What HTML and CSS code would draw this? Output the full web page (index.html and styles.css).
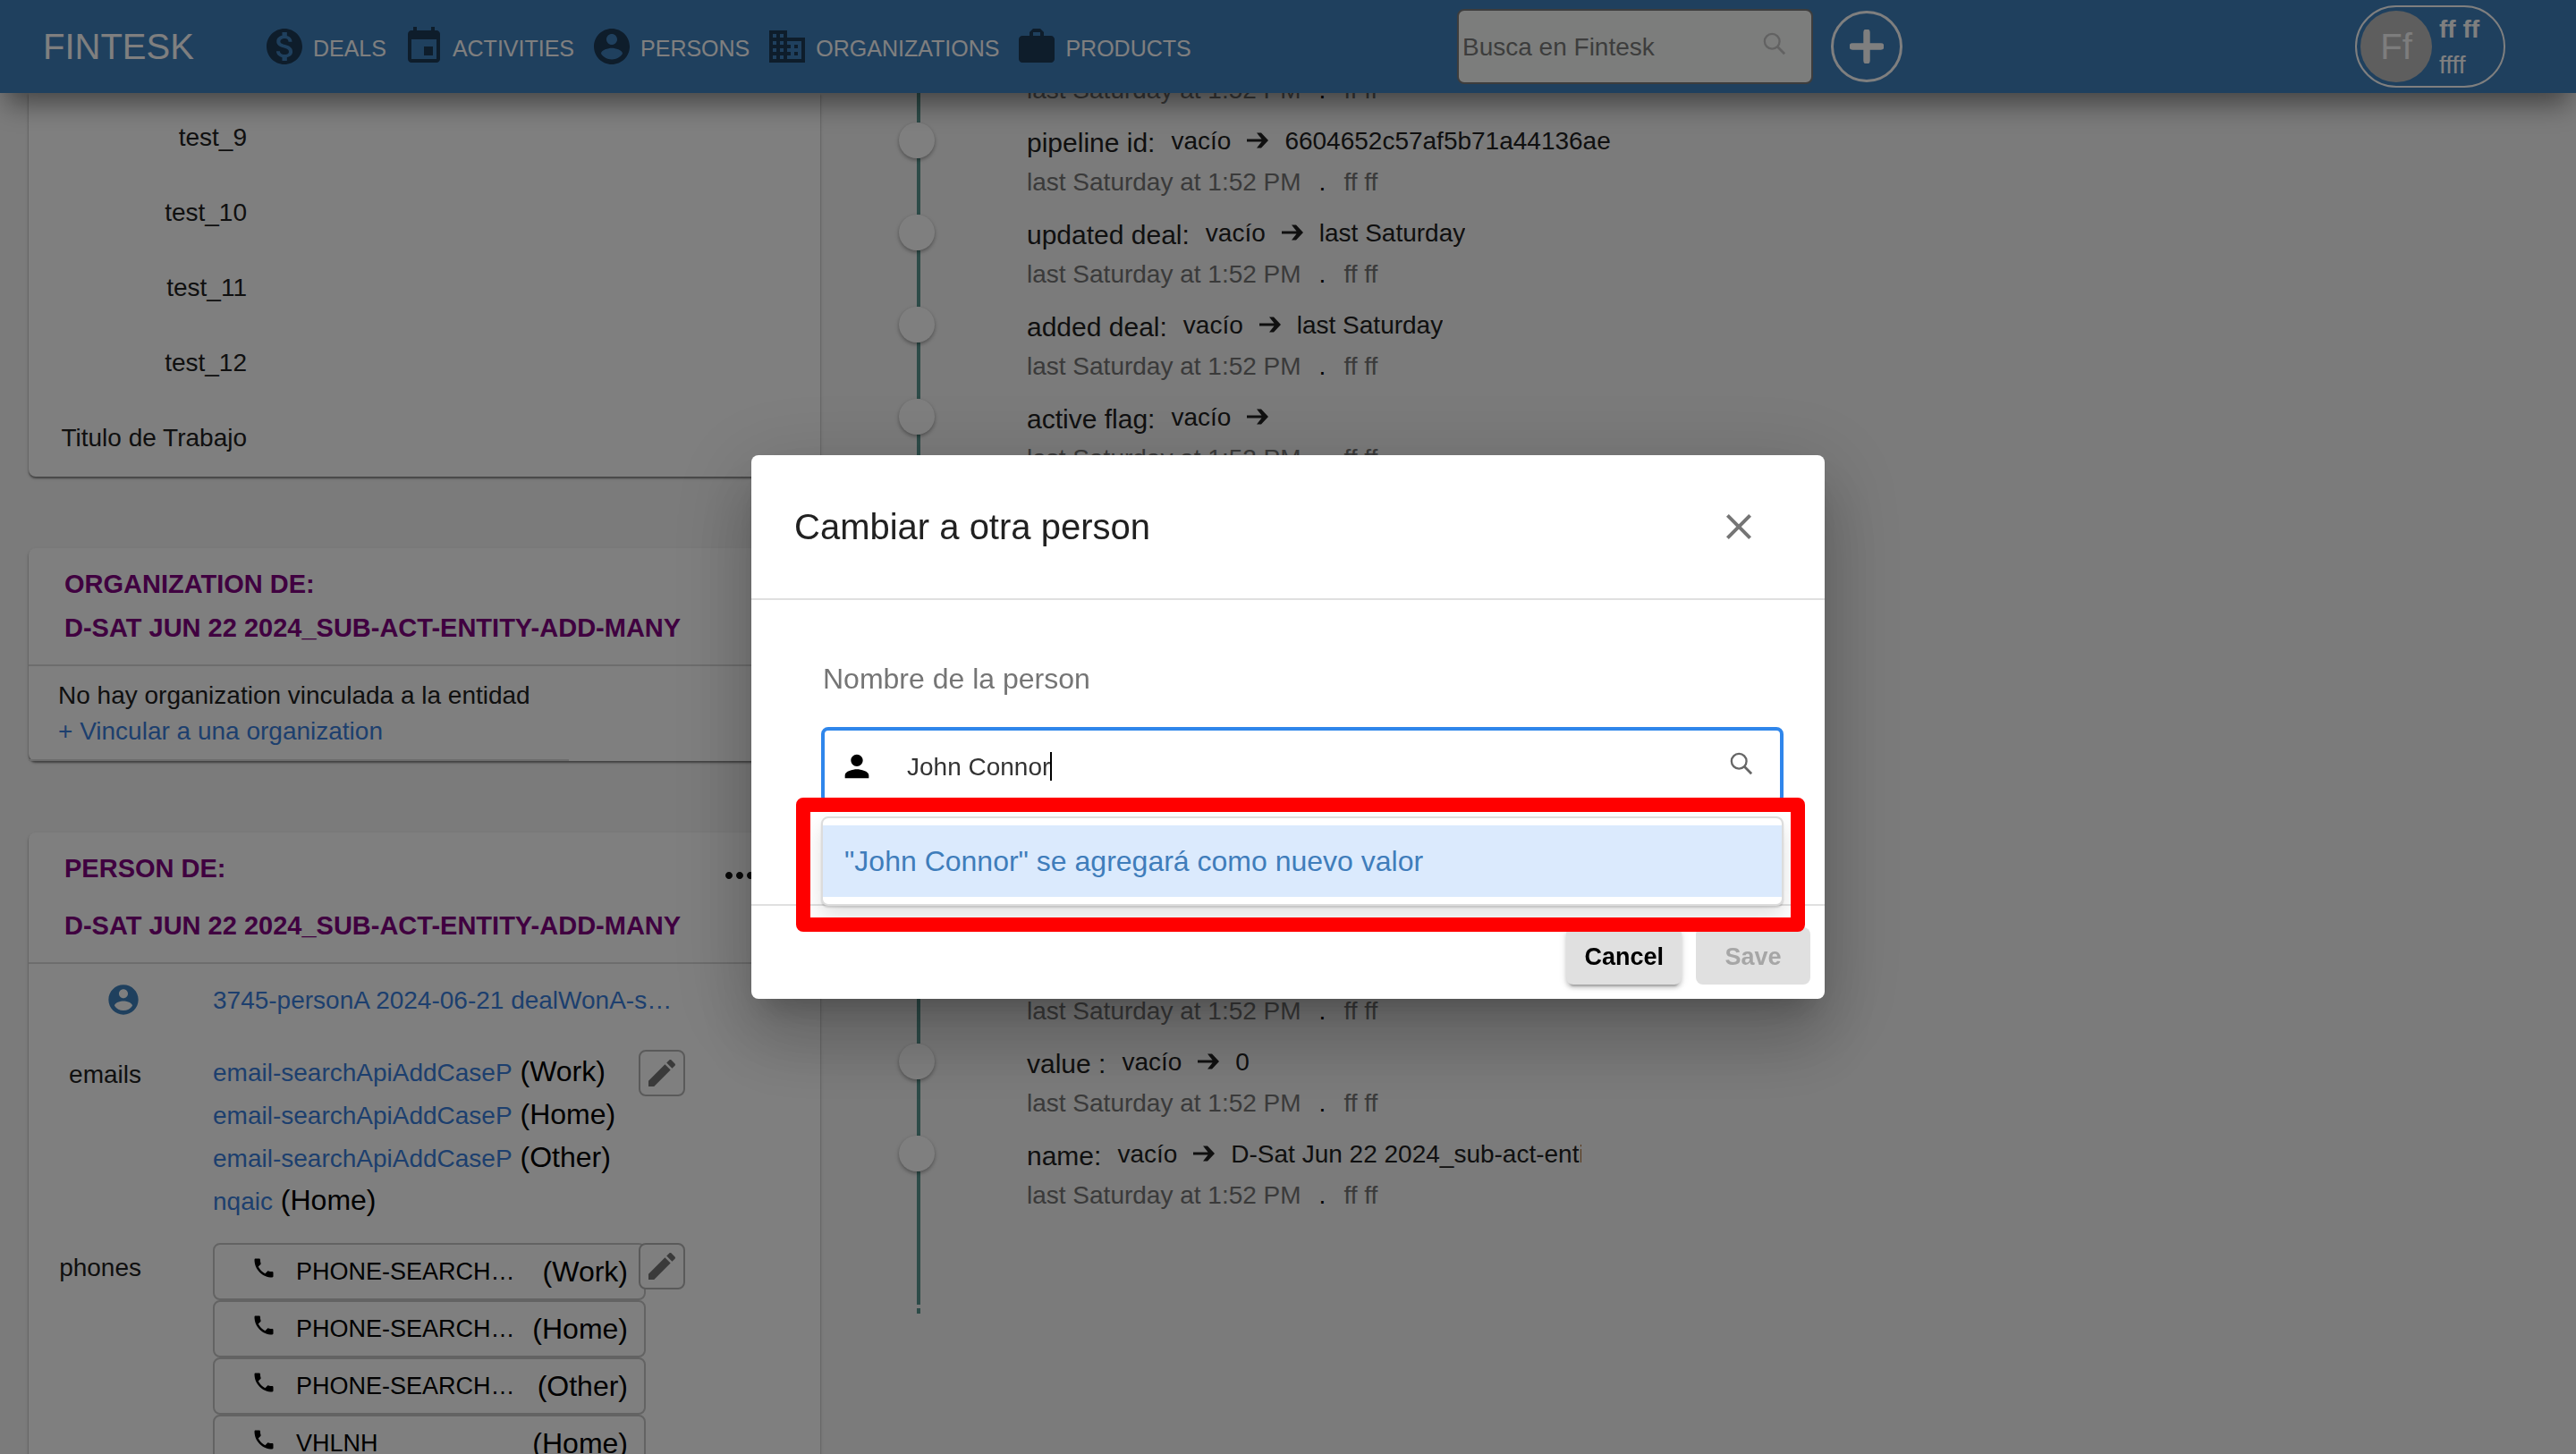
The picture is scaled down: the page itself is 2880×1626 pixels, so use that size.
FILE: index.html
```html
<!DOCTYPE html>
<html lang="es">
<head>
<meta charset="utf-8">
<title>Fintesk</title>
<meta name="viewport" content="width=device-width, initial-scale=1">
<link rel="stylesheet" href="styles.css">
</head>
<body>
<svg class="sprite" aria-hidden="true">
  <symbol id="i-deal" viewBox="0 0 24 24"><path d="M12 2C6.48 2 2 6.48 2 12s4.48 10 10 10 10-4.480 10-10S17.520 2 12 2zm1.410 16.090V20h-2.670v-1.930c-1.710-.36-3.160-1.460-3.270-3.400h1.960c.1 1.050.82 1.870 2.650 1.870 1.960 0 2.400-.98 2.400-1.590 0-.83-.44-1.610-2.670-2.140-2.480-.6-4.180-1.620-4.180-3.670 0-1.720 1.390-2.840 3.110-3.210V4h2.670v1.950c1.860.45 2.790 1.860 2.850 3.390H14.300c-.05-1.110-.64-1.870-2.220-1.870-1.500 0-2.400.68-2.400 1.640 0 .84.65 1.390 2.670 1.910s4.180 1.390 4.180 3.910c-.01 1.830-1.380 2.830-3.120 3.160z"/></symbol>
  <symbol id="i-event" viewBox="0 0 24 24"><path d="M17 12h-5v5h5v-5zM16 1v2H8V1H6v2H5c-1.110 0-1.990.9-1.990 2L3 19c0 1.100.89 2 2 2h14c1.100 0 2-.9 2-2V5c0-1.100-.9-2-2-2h-1V1h-2zm3 18H5V8h14v11z"/></symbol>
  <symbol id="i-account" viewBox="0 0 24 24"><path d="M12 2C6.480 2 2 6.480 2 12s4.480 10 10 10 10-4.480 10-10S17.520 2 12 2zm0 3c1.660 0 3 1.340 3 3s-1.340 3-3 3-3-1.340-3-3 1.340-3 3-3zm0 14.200c-2.500 0-4.710-1.280-6-3.220.03-1.990 4-3.080 6-3.080 1.990 0 5.970 1.090 6 3.080-1.290 1.940-3.500 3.220-6 3.220z"/></symbol>
  <symbol id="i-org" viewBox="0 0 24 24"><path d="M12 7V3H2v18h20V7H12zM6 19H4v-2h2v2zm0-4H4v-2h2v2zm0-4H4V9h2v2zm0-4H4V5h2v2zm4 12H8v-2h2v2zm0-4H8v-2h2v2zm0-4H8V9h2v2zm0-4H8V5h2v2zm10 12h-8v-2h2v-2h-2v-2h2v-2h-2V9h8v10zm-2-8h-2v2h2v-2zm0 4h-2v2h2v-2z"/></symbol>
  <symbol id="i-product" viewBox="0 0 24 24"><path d="M20 6h-4V4l-2-2h-4L8 4v2H4c-1.100 0-2 .9-2 2v11c0 1.100.9 2 2 2h16c1.100 0 2-.9 2-2V8c0-1.100-.9-2-2-2zm-6 0h-4V4h4v2z"/></symbol>
  <symbol id="i-search" viewBox="0 0 28 28"><circle cx="11" cy="11" r="9" fill="none" stroke="currentColor" stroke-width="2.500"/><path d="M17.500 17.500L26 26" stroke="currentColor" stroke-width="3" fill="none"/></symbol>
  <symbol id="i-plus" viewBox="0 0 36 36"><path d="M18 3v30M3 18h30" stroke="currentColor" stroke-width="7" stroke-linecap="round" fill="none"/></symbol>
  <symbol id="i-arrow" viewBox="0 0 26 20"><path d="M1 8.500h16.500L12 1.500h5L25 10l-8 8.500h-5l5.500-7H1z"/></symbol>
  <symbol id="i-more" viewBox="0 0 24 24"><path d="M6 10c-1.100 0-2 .9-2 2s.9 2 2 2 2-.9 2-2-.9-2-2-2zm12 0c-1.100 0-2 .9-2 2s.9 2 2 2 2-.9 2-2-.9-2-2-2zm-6 0c-1.100 0-2 .9-2 2s.9 2 2 2 2-.9 2-2-.9-2-2-2z"/></symbol>
  <symbol id="i-edit" viewBox="0 0 24 24"><path d="M3 17.250V21h3.750L17.810 9.940l-3.750-3.750L3 17.250zM20.710 7.040c.39-.39.39-1.020 0-1.410l-2.340-2.340c-.39-.39-1.020-.39-1.410 0l-1.830 1.830 3.750 3.750 1.830-1.830z"/></symbol>
  <symbol id="i-phone" viewBox="0 0 24 24"><path d="M6.620 10.790c1.440 2.830 3.760 5.140 6.590 6.590l2.200-2.200c.27-.27.67-.36 1.020-.24 1.120.37 2.330.57 3.570.57.55 0 1 .45 1 1V20c0 .55-.45 1-1 1-9.390 0-17-7.610-17-17 0-.55.45-1 1-1h3.500c.55 0 1 .45 1 1 0 1.250.2 2.450.57 3.570.11.35.03.74-.25 1.020l-2.200 2.200z"/></symbol>
  <symbol id="i-person" viewBox="0 0 24 24"><path d="M12 12c2.210 0 4-1.790 4-4s-1.790-4-4-4-4 1.790-4 4 1.790 4 4 4zm0 2c-2.670 0-8 1.340-8 4v2h16v-2c0-2.660-5.330-4-8-4z"/></symbol>
  <symbol id="i-close" viewBox="0 0 24 24"><path d="M19 6.410L17.590 5 12 10.590 6.410 5 5 6.410 10.590 12 5 17.590 6.410 19 12 13.410 17.590 19 19 17.590 13.410 12z"/></symbol>
</svg>

<header class="topbar">
  <a class="brand" href="#">FINTESK</a>
  <nav class="nav">
    <a href="#"><svg><use href="#i-deal"/></svg><span>DEALS</span></a>
    <a href="#"><svg><use href="#i-event"/></svg><span>ACTIVITIES</span></a>
    <a href="#"><svg><use href="#i-account"/></svg><span>PERSONS</span></a>
    <a href="#"><svg><use href="#i-org"/></svg><span>ORGANIZATIONS</span></a>
    <a href="#"><svg><use href="#i-product"/></svg><span>PRODUCTS</span></a>
  </nav>
  <div class="tools">
    <div class="search">
      <input type="text" placeholder="Busca en Fintesk" aria-label="Busca en Fintesk">
      <svg><use href="#i-search"/></svg>
    </div>
    <button class="add" type="button" aria-label="Agregar"><svg><use href="#i-plus"/></svg></button>
  </div>
  <button class="user" type="button">
    <span class="avatar">Ff</span>
    <span class="user-text"><b>ff ff</b><span>ffff</span></span>
  </button>
</header>

<main class="page">
  <div class="side">
    <section class="card fields">
      <div class="field">test_9</div>
      <div class="field">test_10</div>
      <div class="field">test_11</div>
      <div class="field">test_12</div>
      <div class="field">Titulo de Trabajo</div>
    </section>

    <section class="card">
      <header class="card-head">
        <h2>ORGANIZATION DE:</h2>
        <h2>D-SAT JUN 22 2024_SUB-ACT-ENTITY-ADD-MANY</h2>
      </header>
      <div class="org-body">
        <p>No hay organization vinculada a la entidad</p>
        <a href="#">+ Vincular a una organization</a>
      </div>
      <div class="rule"></div>
    </section>

    <section class="card">
      <header class="card-head">
        <div class="head-row">
          <h2>PERSON DE:</h2>
          <button class="more" type="button" aria-label="Opciones"><svg><use href="#i-more"/></svg></button>
        </div>
        <h2>D-SAT JUN 22 2024_SUB-ACT-ENTITY-ADD-MANY</h2>
      </header>
      <div class="person-body">
        <div class="prop prop-name">
          <span class="key"><svg class="who"><use href="#i-account"/></svg></span>
          <a href="#">3745-personA 2024-06-21 dealWonA-s…</a>
        </div>
        <div class="prop">
          <span class="key">emails</span>
          <ul class="value emails">
            <li><a href="#">email-searchApiAddCaseP</a> (Work)</li>
            <li><a href="#">email-searchApiAddCaseP</a> (Home)</li>
            <li><a href="#">email-searchApiAddCaseP</a> (Other)</li>
            <li><a href="#">nqaic</a> (Home)</li>
          </ul>
          <button class="edit" type="button" aria-label="Editar emails"><svg><use href="#i-edit"/></svg></button>
        </div>
        <div class="prop">
          <span class="key">phones</span>
          <div class="value phones">
            <button class="phone" type="button"><svg><use href="#i-phone"/></svg><span>PHONE-SEARCH…</span><em>(Work)</em></button>
            <button class="phone" type="button"><svg><use href="#i-phone"/></svg><span>PHONE-SEARCH…</span><em>(Home)</em></button>
            <button class="phone" type="button"><svg><use href="#i-phone"/></svg><span>PHONE-SEARCH…</span><em>(Other)</em></button>
            <button class="phone" type="button"><svg><use href="#i-phone"/></svg><span>VHLNH</span><em>(Home)</em></button>
          </div>
          <button class="edit" type="button" aria-label="Editar phones"><svg><use href="#i-edit"/></svg></button>
        </div>
      </div>
    </section>
  </div>

  <ol class="timeline">
    <li class="event"><div class="mark"></div><div class="info"><div class="change"></div><div class="when"><span>last Saturday at 1:52 PM</span><i>.</i><span>ff ff</span></div></div></li>
    <li class="event"><div class="mark"></div><div class="info"><div class="change"><span class="name">pipeline id:</span><span>vacío</span><svg><use href="#i-arrow"/></svg><span class="to">6604652c57af5b71a44136ae</span></div><div class="when"><span>last Saturday at 1:52 PM</span><i>.</i><span>ff ff</span></div></div></li>
    <li class="event"><div class="mark"></div><div class="info"><div class="change"><span class="name">updated deal:</span><span>vacío</span><svg><use href="#i-arrow"/></svg><span class="to">last Saturday</span></div><div class="when"><span>last Saturday at 1:52 PM</span><i>.</i><span>ff ff</span></div></div></li>
    <li class="event"><div class="mark"></div><div class="info"><div class="change"><span class="name">added deal:</span><span>vacío</span><svg><use href="#i-arrow"/></svg><span class="to">last Saturday</span></div><div class="when"><span>last Saturday at 1:52 PM</span><i>.</i><span>ff ff</span></div></div></li>
    <li class="event"><div class="mark"></div><div class="info"><div class="change"><span class="name">active flag:</span><span>vacío</span><svg><use href="#i-arrow"/></svg></div><div class="when"><span>last Saturday at 1:52 PM</span><i>.</i><span>ff ff</span></div></div></li>
    <li class="event"><div class="mark"></div></li>
    <li class="event"><div class="mark"></div></li>
    <li class="event"><div class="mark"></div></li>
    <li class="event"><div class="mark"></div></li>
    <li class="event"><div class="mark"></div></li>
    <li class="event"><div class="mark"></div><div class="info"><div class="change"></div><div class="when"><span>last Saturday at 1:52 PM</span><i>.</i><span>ff ff</span></div></div></li>
    <li class="event"><div class="mark"></div><div class="info"><div class="change"><span class="name">value :</span><span>vacío</span><svg><use href="#i-arrow"/></svg><span class="to">0</span></div><div class="when"><span>last Saturday at 1:52 PM</span><i>.</i><span>ff ff</span></div></div></li>
    <li class="event last"><div class="mark"></div><div class="info"><div class="change"><span class="name">name:</span><span>vacío</span><svg><use href="#i-arrow"/></svg><span class="to">D-Sat Jun 22 2024_sub-act-entity-add-many</span></div><div class="when"><span>last Saturday at 1:52 PM</span><i>.</i><span>ff ff</span></div></div></li>
    <li class="tail"></li>
  </ol>
</main>

<div class="backdrop">
  <section class="dialog" role="dialog" aria-modal="true" aria-labelledby="dialog-title">
    <header class="dialog-head">
      <h1 id="dialog-title">Cambiar a otra person</h1>
      <button class="close" type="button" aria-label="Cerrar"><svg><use href="#i-close"/></svg></button>
    </header>
    <div class="dialog-body">
      <label for="person-name">Nombre de la person</label>
      <div class="combo">
        <div class="combo-field">
          <svg class="combo-person"><use href="#i-person"/></svg>
          <input id="person-name" type="text" value="John Connor"><span class="caret"></span>
          <svg class="combo-search"><use href="#i-search"/></svg>
        </div>
        <ul class="options" role="listbox"><li role="option" aria-selected="true">"John Connor" se agregará como nuevo valor</li></ul>
        <div class="callout"></div>
      </div>
    </div>
    <footer class="dialog-foot">
      <button class="btn raised" type="button">Cancel</button>
      <button class="btn" type="button" disabled>Save</button>
    </footer>
  </section>
</div>
</body>
</html>
```
FILE: styles.css
```css
*, *::before, *::after { box-sizing: border-box; }

:root {
  --brand: #3f80bd;
  --link: #3a7fdc;
  --text: #212121;
  --muted: #757575;
}

body {
  margin: 0;
  height: 100vh;
  display: flex;
  flex-direction: column;
  overflow: hidden;
  background: #f6f6f6;
  color: var(--text);
  font: 28px/40px "Liberation Sans", Arial, Helvetica, sans-serif;
}

h1, h2, p, ul, ol { margin: 0; padding: 0; }
ul, ol { list-style: none; }
a { color: var(--link); text-decoration: none; }
button, input { font: inherit; color: inherit; margin: 0; padding: 0; border: 0; background: none; outline: 0; }
svg { display: block; flex: none; fill: currentColor; }
.sprite { position: absolute; width: 0; height: 0; }

/* top bar */
.topbar {
  position: relative;
  z-index: 2;
  flex: none;
  display: flex;
  align-items: center;
  height: 104px;
  padding: 0 79px 0 48px;
  background: var(--brand);
  color: #fff;
  box-shadow: 0 20px 28px -8px rgba(0, 0, 0, .45);
}
.brand { font-size: 40px; line-height: 48px; color: #fff; margin-right: 77px; }
.nav { display: flex; gap: 18px; }
.nav a { display: flex; align-items: center; gap: 8px; font-size: 25px; color: #fff; }
.nav span { padding-top: 4px; }
.nav svg { width: 48px; height: 48px; color: #1d3a57; }
.tools { display: flex; align-items: center; gap: 20px; margin-left: auto; margin-right: 506px; }
.search {
  display: flex;
  align-items: center;
  width: 398px;
  height: 84px;
  padding: 0 28px 0 4px;
  border: 2px solid #7a7a7a;
  border-radius: 8px;
  background: #f8faf9;
}
.search input { flex: 1; min-width: 0; height: 60px; padding-top: 2px; }
.search input::placeholder { color: #7a7a7a; opacity: 1; }
.search svg { width: 26px; height: 26px; color: #c4c4c4; margin-bottom: 6px; }
.add {
  display: grid;
  place-items: center;
  width: 80px;
  height: 80px;
  border: 3px solid #fff;
  border-radius: 50%;
}
.add svg { width: 38px; height: 38px; }
.user {
  display: flex;
  align-items: center;
  gap: 8px;
  width: 168px;
  height: 92px;
  padding: 0 4px;
  border: 2px solid #fff;
  border-radius: 46px;
}
.avatar {
  display: grid;
  place-items: center;
  width: 80px;
  height: 80px;
  border-radius: 50%;
  background: #bdbdbd;
  color: #fafafa;
  font-size: 40px;
}
.user-text { display: grid; padding-top: 2px; text-align: left; }

/* page */
.page {
  flex: 1;
  min-height: 0;
  display: flex;
  align-items: flex-start;
  gap: 88px;
  padding-left: 32px;
  isolation: isolate;
}
.side { width: 885px; display: grid; gap: 80px; }
.card {
  border-radius: 8px;
  background: #fff;
  box-shadow: 0 2px 2px rgba(0, 0, 0, .4), 0 2px 4px rgba(0, 0, 0, .12);
}
.fields { padding: 8px 0 1px 33px; border-radius: 0 0 8px 8px; }
.field { width: 211px; line-height: 84px; text-align: right; white-space: nowrap; }
.card-head { padding: 16px 66px 16px 40px; border-bottom: 2px solid #dadada; }
.card-head h2 { font-size: 29px; line-height: 49px; color: #800080; white-space: nowrap; }
.head-row { display: flex; justify-content: space-between; height: 64px; }
.more { align-self: center; }
.more svg { width: 48px; height: 48px; color: #111; }
.org-body { padding: 13px 33px 11px; }
.rule { width: 604px; height: 2px; background: #dadada; }

.person-body { display: grid; gap: 24px; padding: 8px 0 24px 33px; }
.prop { display: flex; align-items: flex-start; }
.prop-name { align-items: center; height: 64px; }
.prop-name a { padding-top: 2px; }
.key { display: flex; justify-content: flex-end; width: 93px; margin-right: 80px; line-height: 56px; }
.who { width: 40px; height: 40px; color: var(--brand); }
.value { width: 476px; }
.emails li { color: #000; font-size: 32px; line-height: 48px; }
.emails a { font-size: 28px; line-height: 32px; }
.edit {
  display: grid;
  place-items: center;
  width: 52px;
  height: 52px;
  border: 2px solid #b4b4b4;
  border-radius: 8px;
  background: #fff;
  color: #757575;
  z-index: 1;
}
.edit svg { width: 40px; height: 40px; }
.phone {
  display: flex;
  align-items: center;
  width: 484px;
  height: 64px;
  padding: 0 18px 0 41px;
  border: 2px solid #c6c6c6;
  border-radius: 8px;
  color: #000;
}
.phone svg { width: 28px; height: 28px; margin: 0 22px 8px 0; }
.phone span { font-size: 27px; }
.phone em { margin-left: auto; font-size: 32px; font-style: normal; }

/* timeline */
.timeline { flex: 1; margin-top: -70px; }
.event { display: flex; gap: 103px; min-height: 103px; }
.mark { width: 40px; display: flex; flex-direction: column; }
.mark::before {
  content: "";
  width: 40px;
  height: 40px;
  border-radius: 50%;
  background: #fff;
  box-shadow: 0 2px 4px rgba(0, 0, 0, .35);
  z-index: 1;
}
.mark::after { content: ""; flex: 1; width: 4px; margin-left: 20px; background: #5a9690; }
.change { display: flex; align-items: center; gap: 17px; height: 40px; white-space: nowrap; }
.change span { padding-top: 2px; }
.change svg { width: 26px; height: 20px; }
.change .name { font-size: 30px; padding: 6px 1px 0 0; }
.to { max-width: 392px; overflow: hidden; }
.when { display: flex; gap: 20px; margin-top: 7px; color: var(--muted); }
.when i { font-style: normal; color: #000; }
.event.last { min-height: 189px; }
.tail { width: 4px; height: 6px; margin: 4px 0 0 20px; background: #5a9690; }

/* dialog */
.backdrop {
  position: fixed;
  inset: 0;
  z-index: 10;
  display: grid;
  place-items: center;
  background: rgba(0, 0, 0, .5);
}
.dialog {
  width: min(1200px, 96vw);
  border-radius: 8px;
  background: #fff;
  box-shadow: 0 22px 30px -14px rgba(0, 0, 0, .2), 0 48px 76px 6px rgba(0, 0, 0, .14), 0 18px 92px 16px rgba(0, 0, 0, .12);
}
.dialog-head {
  display: flex;
  align-items: center;
  justify-content: space-between;
  padding: 56px 72px 56px 48px;
  border-bottom: 2px solid #e0e0e0;
}
.dialog-head h1 { font-size: 40px; line-height: 48px; font-weight: 400; }
.close svg { width: 48px; height: 48px; color: #757575; }
.dialog-body { padding: 64px 46px 112px 78px; }
.dialog-body label { display: block; padding-left: 2px; font-size: 32px; line-height: 48px; color: var(--muted); }
.combo { position: relative; margin-top: 30px; }
.combo-field {
  display: flex;
  align-items: center;
  height: 86px;
  padding: 2px 30px 0 16px;
  border: 4px solid #2f86eb;
  border-radius: 8px;
}
.combo-person { width: 40px; height: 40px; margin-right: 36px; color: #000; }
.combo-field input { width: 160px; padding-top: 2px; color: #333; }
.caret { width: 2px; height: 32px; background: #000; }
.combo-search { width: 26px; height: 26px; margin: 0 0 6px auto; color: #666; }
.options {
  position: absolute;
  top: 100px;
  left: 0;
  right: 0;
  padding: 8px 0;
  border: 2px solid #dcdcdc;
  border-radius: 8px;
  background: #fff;
  box-shadow: 0 2px 2px rgba(0, 0, 0, .15), 0 12px 24px rgba(0, 0, 0, .12);
}
.options li { padding: 0 24px; font-size: 32px; line-height: 80px; background: #dbeafd; color: #3f7dbb; }
.callout {
  position: absolute;
  top: 79px;
  left: -28px;
  right: -24px;
  height: 150px;
  border: 16px solid #f00;
  border-radius: 8px;
  z-index: 1;
  pointer-events: none;
}
.dialog-foot {
  display: flex;
  justify-content: flex-end;
  gap: 16px;
  padding: 24px 16px 16px;
  border-top: 2px solid #e0e0e0;
}
.btn {
  min-width: 128px;
  height: 64px;
  padding: 2px 20px 0;
  border-radius: 8px;
  background: #e0e0e0;
  color: #000;
  font-size: 27px;
  font-weight: 700;
}
.btn:disabled { color: #a6a6a6; }
.raised { box-shadow: 0 6px 2px -4px rgba(0, 0, 0, .2), 0 4px 4px rgba(0, 0, 0, .14), 0 2px 10px rgba(0, 0, 0, .12); }
```
